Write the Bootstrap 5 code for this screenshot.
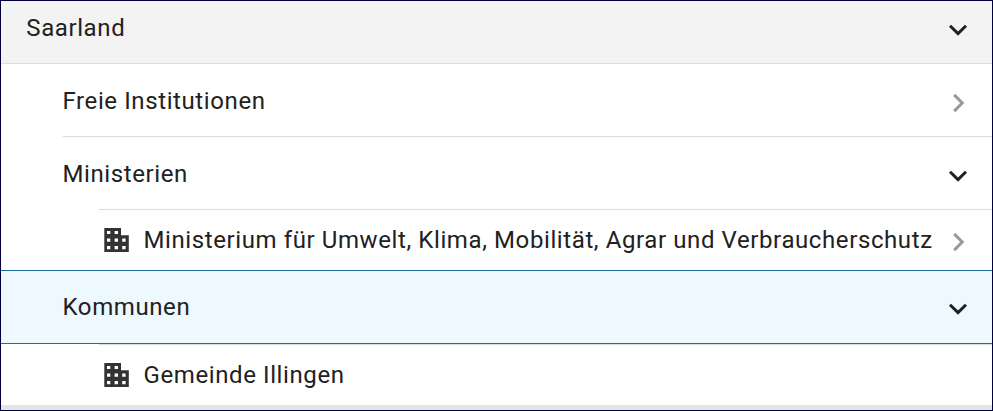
<!DOCTYPE html>
<html lang="de">
<head>
<meta charset="utf-8">
<title>Saarland</title>
<link href="https://cdn.jsdelivr.net/npm/bootstrap@5.3.0/dist/css/bootstrap.min.css" rel="stylesheet">
<style>
body{font-family:Roboto,sans-serif;font-size:24px;line-height:28px;letter-spacing:.6px;color:#212121}
.tree{height:411px;border:1px solid #00003c}
.entry{padding-right:22px;border-bottom:0 solid #dcdcdc}
.top-level{height:63px;padding-top:13px;padding-left:25.3px;background:#f3f3f3;border-bottom-width:1px}
.second{height:73px;padding-top:23px;margin-left:62px}
.second span,.active-entry span{margin-left:-.5px}
.ruled{border-bottom-width:1px}
.third{margin-left:98px;padding-left:5px;border-top:1px solid #dcdcdc;height:61px;padding-top:16px}
.active-entry{height:74px;padding-top:22px;padding-left:62px;background:#edf8ff;border-top:1px solid #1b6f9f;border-bottom:1px solid #1b6f9f}
.arrow{width:24px;height:24px;margin-top:4px;fill:none;stroke:#212121;stroke-width:3}
.arrow.muted{stroke:#999}
.building{width:25px;height:24px;margin:2px 14.5px 0 0;fill:#333}
.footer-strip{height:5px;background:#e5e5e5}
</style>
</head>
<body>
<svg class="d-none">
<symbol id="down" viewBox="0 0 24 24"><path d="M4 7.7 12 15.6 20 7.7"/></symbol>
<symbol id="right" viewBox="0 0 24 24"><path d="M8.2 3.9 16.2 12 8.2 20.1"/></symbol>
<symbol id="house" viewBox="0 0 25 24"><path fill-rule="evenodd" d="M.3 0H17V7.3H24.8V24H.3ZM3 3V6H6.3V3ZM10.6 3V6H14V3ZM3 10.5V13.7H6.3V10.5ZM10.6 10.5V13.7H14V10.5ZM18.2 10.5V13.7H21.6V10.5ZM3 18V21.2H6.3V18ZM10.6 18V21.2H14V18ZM18.2 18V21.2H21.6V18Z"/></symbol>
</svg>
<main class="tree d-flex flex-column overflow-hidden bg-white">
<div class="entry top-level d-flex align-items-start justify-content-between"><span>Saarland</span><svg class="arrow"><use href="#down"/></svg></div>
<div class="entry second ruled d-flex align-items-start justify-content-between"><span>Freie Institutionen</span><svg class="arrow muted"><use href="#right"/></svg></div>
<div class="entry second d-flex align-items-start justify-content-between" style="height:72px"><span>Ministerien</span><svg class="arrow"><use href="#down"/></svg></div>
<div class="entry third d-flex align-items-start"><svg class="building"><use href="#house"/></svg><span class="text-nowrap">Ministerium für Umwelt, Klima, Mobilität, Agrar und Verbraucherschutz</span><svg class="arrow muted ms-auto flex-shrink-0"><use href="#right"/></svg></div>
<div class="entry active-entry d-flex align-items-start justify-content-between"><span>Kommunen</span><svg class="arrow"><use href="#down"/></svg></div>
<div class="entry third d-flex align-items-start"><svg class="building"><use href="#house"/></svg><span>Gemeinde Illingen</span></div>
<div class="footer-strip"></div>
</main>
<script src="https://cdn.jsdelivr.net/npm/bootstrap@5.3.0/dist/js/bootstrap.bundle.min.js"></script>
</body>
</html>
